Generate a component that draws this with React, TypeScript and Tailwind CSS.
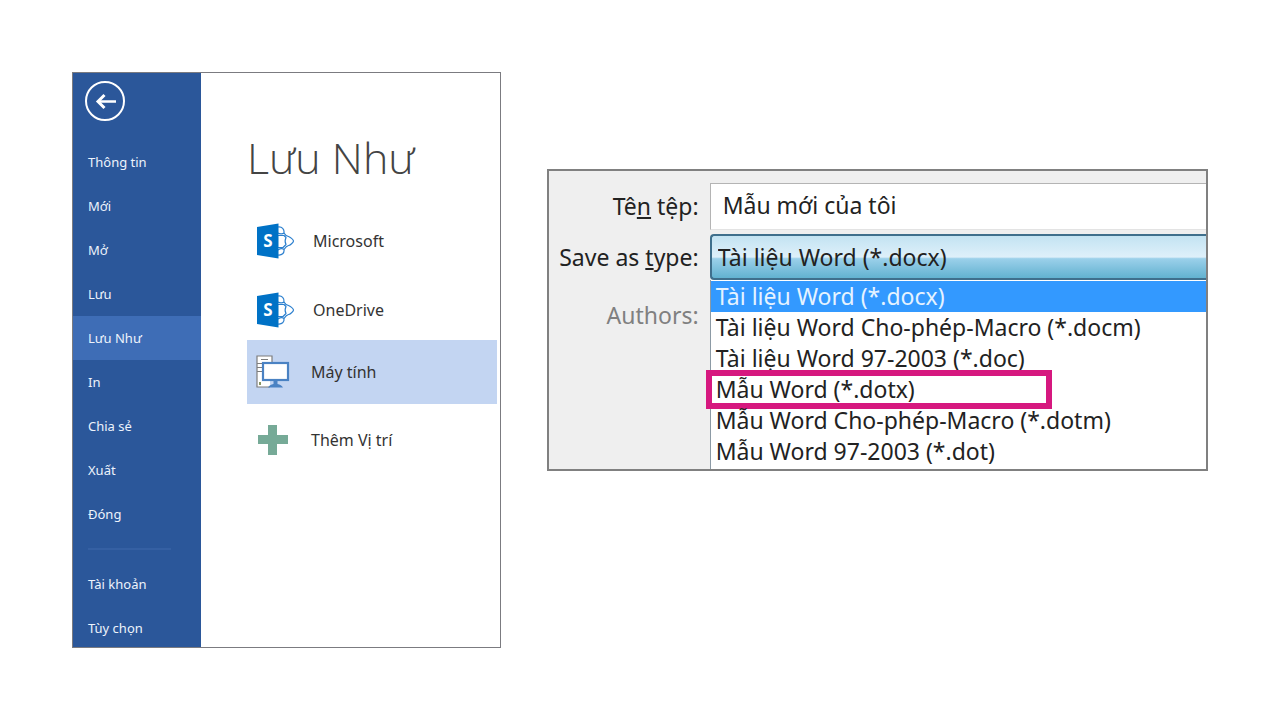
import React, { useState } from "react";

const menuItems = ["Thông tin", "Mới", "Mở", "Lưu", "Lưu Như", "In", "Chia sẻ", "Xuất", "Đóng"];
const accountItems = ["Tài khoản", "Tùy chọn"];

const fileTypes = [
  "Tài liệu Word (*.docx)",
  "Tài liệu Word Cho-phép-Macro (*.docm)",
  "Tài liệu Word 97-2003 (*.doc)",
  "Mẫu Word (*.dotx)",
  "Mẫu Word Cho-phép-Macro (*.dotm)",
  "Mẫu Word 97-2003 (*.dot)",
];
const templateType = 3;

const SharePointIcon: React.FC = () => (
  <svg viewBox="0 0 38 36" className="w-[38px] h-9" aria-hidden="true">
    <g fill="none" stroke="#2b7fce" strokeWidth="1.2" strokeLinejoin="round">
      <path d="M21 4C25 3.500 27.500 6 27 10C28 12 29.500 13 31.500 13.500C33 14 36.500 16.500 36.500 18C36.500 19.500 33 22.500 31.500 22.500C29.500 23 28 25 27 26.500C27.500 30 25 32.500 21 32" />
      <path d="M21 12.500H27L29 14.500C28 16.500 28 19.500 29 21.500L26 24.500H21" />
      <path d="M21 10C22.500 11 25.500 11.500 27 10M21 27C22.500 25.500 25.500 25 27 26.500" />
    </g>
    <path d="M0 4L21.500 0.500V35.500L0 32Z" fill="#0072c6" />
    <text x="11" y="24" textAnchor="middle" fontSize="17" fontWeight="700" fill="#fff" fontFamily="'Noto Sans', sans-serif">
      S
    </text>
  </svg>
);

const ComputerIcon: React.FC = () => (
  <svg viewBox="0 0 34 34" className="w-[34px] h-[34px] -ml-px" aria-hidden="true">
    <path d="M1 1H16V32H1Z" fill="#fff" stroke="#7d7d7d" strokeWidth="1.2" />
    <path d="M5 4.500H12M1 8.500H6M1 12.500H6M1 16.500H6" stroke="#7d7d7d" strokeWidth="1.2" />
    <path d="M4 27V30" stroke="#6b7a3a" strokeWidth="1.6" />
    <path d="M14 26H17V33H14Z" fill="#c3d5f2" />
    <rect x="7" y="8" width="25" height="17" fill="#fff" stroke="#4a82c3" strokeWidth="2.200" />
    <path d="M17.500 26H21.500V29C24 29.500 26 30.500 27 32.500H12C13 30.500 15 29.500 17.500 29Z" fill="#4a82c3" />
  </svg>
);

const PlusIcon: React.FC = () => (
  <svg viewBox="0 0 32 32" className="w-8 h-8" aria-hidden="true">
    <path d="M11 1H20V11H31V20H20V31H11V20H1V11H11Z" fill="#76aa97" />
  </svg>
);

const places = [
  { name: "Microsoft", icon: SharePointIcon, box: "h-[60px] mb-[9px] gap-4" },
  { name: "OneDrive", icon: SharePointIcon, box: "h-[60px] gap-4" },
  { name: "Máy tính", icon: ComputerIcon, box: "h-16 gap-[14px]" },
  { name: "Thêm Vị trí", icon: PlusIcon, box: "h-[72px] gap-[14px]" },
];

const Backstage: React.FC = () => {
  const [page, setPage] = useState("Lưu Như");
  const [place, setPlace] = useState("Máy tính");

  return (
    <section className="flex flex-[429] min-w-0 min-h-[576px] border border-[#7b7b80] bg-white">
      <nav className="flex flex-col w-32 shrink-0 bg-[#2b579a] text-[13px] leading-5 text-[#edf3fc]">
        <button aria-label="Quay lại" className="mt-2 ml-3 w-10 h-10">
          <svg viewBox="0 0 40 40" className="w-10 h-10" fill="none" stroke="#fff">
            <circle cx="20" cy="20" r="19" strokeWidth="2" />
            <path d="M31 20.500H13" strokeWidth="2.500" />
            <path d="M19.500 14L13 20.500L19.500 27" strokeWidth="3" />
          </svg>
        </button>
        <div className="flex flex-col mt-[19px]">
          {menuItems.map((item) => (
            <button
              key={item}
              onClick={() => setPage(item)}
              className={`h-11 pl-[15px] text-left ${item === page ? "bg-[#3e6db6]" : ""}`}
            >
              {item}
            </button>
          ))}
        </div>
        <hr className="mt-3 ml-[15px] mr-[30px] border-t-2 border-[#3560a3]" />
        <div className="flex flex-col gap-6 mt-6 pb-2">
          {accountItems.map((item) => (
            <button key={item} onClick={() => setPage(item)} className="pl-[15px] text-left">
              {item}
            </button>
          ))}
        </div>
      </nav>

      <div className="flex-1 min-w-0 pl-[46px] pr-[3px] pt-[53px]">
        <h1 className="mb-[21px] font-['Open_Sans',sans-serif] text-[43px] leading-16 font-light text-[#444]">Lưu Như</h1>
        <div className="flex flex-col text-base text-[#333]">
          {places.map(({ name, icon: Icon, box }) => (
            <button
              key={name}
              onClick={() => setPlace(name)}
              className={`flex items-center pl-[10px] text-left ${box} ${name === place ? "bg-[#c3d5f2]" : ""}`}
            >
              <span className="w-10 shrink-0">
                <Icon />
              </span>
              {name}
            </button>
          ))}
        </div>
      </div>
    </section>
  );
};

const SaveDialog: React.FC = () => {
  const [fileName, setFileName] = useState("Mẫu mới của tôi");
  const [selected, setSelected] = useState(0);

  return (
    <section className="grid grid-cols-[161px_1fr] flex-[661] min-w-0 mb-20 pt-3 border-2 border-[#808080] bg-[#efefef] text-[23px] text-[#222]">
      <label htmlFor="file-name" className="flex items-center justify-end pr-[11px] pb-1">
        <span>
          Tê<u>n</u> tệp:
        </span>
      </label>
      <div className="pb-1">
        <input
          id="file-name"
          value={fileName}
          onChange={(e) => setFileName(e.target.value)}
          className="block w-full h-[47px] pl-3 pb-1 border border-r-0 border-[#b4b4b4] border-b-[#e3e3e3] bg-white"
        />
      </div>

      <label htmlFor="file-type" className="flex items-center justify-end pr-[11px]">
        <span>
          Save as <u>t</u>ype:
        </span>
      </label>
      <select
        id="file-type"
        value={selected}
        onChange={(e) => setSelected(Number(e.target.value))}
        className="appearance-none w-full h-[46px] pl-[6px] rounded-l-sm border-2 border-r-0 border-[#3f6f8c] bg-[linear-gradient(#c3e3f2,#def0fa_50%,#9bd0ea_54%,#62b2d0)]"
      >
        {fileTypes.map((type, index) => (
          <option key={type} value={index}>
            {type}
          </option>
        ))}
      </select>

      <span className="h-[70px] flex items-center justify-end pr-[11px] text-[#808080]">Authors:</span>
      <ul role="listbox" aria-label="Save as type" className="pb-[2px] border-l border-[#8c9aa5] bg-white">
        {fileTypes.map((type, index) => (
          <li key={type} role="option" aria-selected={index === selected} className="relative first:pt-px">
            <button
              onClick={() => setSelected(index)}
              className={`block w-full h-[31px] pl-[5px] text-left leading-[31px] whitespace-nowrap ${
                index === selected ? "bg-[#3399ff] text-[#e6f3ff]" : ""
              }`}
            >
              {type}
            </button>
            {index === templateType && (
              <span className="absolute -left-[5px] -top-1 -bottom-1 w-[70%] border-[6px] border-[#d6187f] pointer-events-none" />
            )}
          </li>
        ))}
      </ul>
    </section>
  );
};

export default function App() {
  return (
    <main className="flex items-center gap-[46px] min-h-screen px-18 py-18 bg-white font-['Noto_Sans',sans-serif]">
      <Backstage />
      <SaveDialog />
    </main>
  );
}
